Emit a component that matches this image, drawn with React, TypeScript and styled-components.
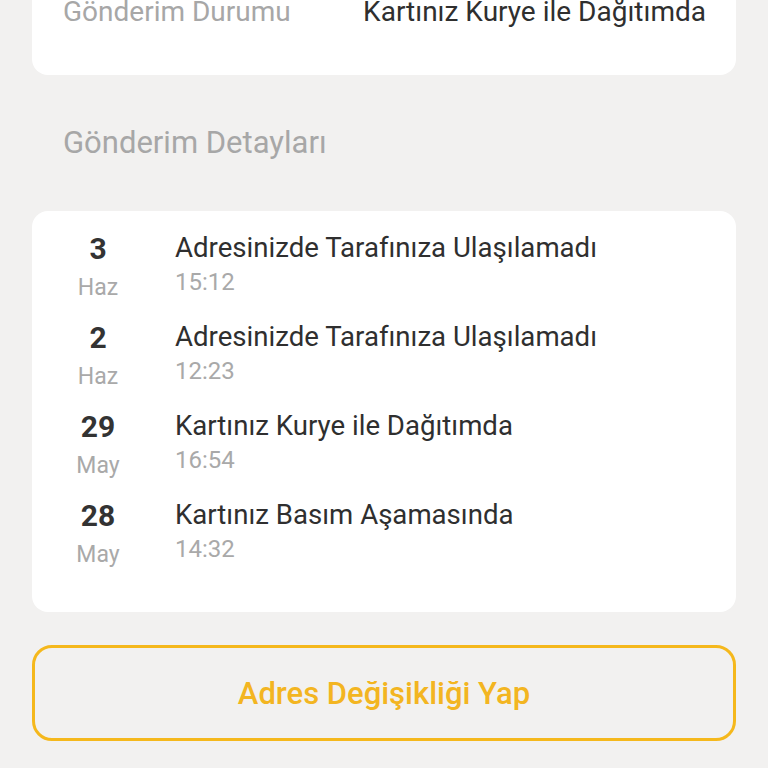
import React from "react";
import styled, { createGlobalStyle } from "styled-components";

const Global = createGlobalStyle`
  html, body { margin: 0; padding: 0; background: #f2f1f0; }
  body { font-family: Roboto, "Noto Sans", sans-serif; -webkit-font-smoothing: antialiased; }
  * { box-sizing: border-box; }
`;

const Page = styled.div`
  display: flex;
  flex-direction: column;
  padding: 0 32px;
  margin-top: -24px;
  min-height: 792px;
`;

const Card = styled.div`
  background: #ffffff;
  border-radius: 16px;
`;

const SummaryCard = styled(Card)`
  padding: 20px 30px 47px 31px;
`;

const SummaryRow = styled.div`
  display: flex;
  justify-content: space-between;
  align-items: baseline;
  font-size: 28px;
  line-height: 32px;
  white-space: nowrap;
`;

const SummaryLabel = styled.span`
  color: #a7a7a7;
`;

const SummaryValue = styled.span`
  color: #2f2f2f;
`;

const SectionTitle = styled.h2`
  margin: 49px 0 49px 31px;
  font-size: 31px;
  line-height: 38px;
  font-weight: 400;
  color: #a7a7a7;
`;

const TimelineCard = styled(Card)`
  display: flex;
  flex-direction: column;
  gap: 12px;
  padding: 18px 30px 39px 31px;
`;

const Row = styled.div`
  display: grid;
  grid-template-columns: 70px 1fr;
  column-gap: 42px;
  align-items: start;
`;

const DateCol = styled.div`
  display: flex;
  flex-direction: column;
  align-items: center;
`;

const Day = styled.span`
  font-size: 30px;
  line-height: 40px;
  font-weight: 700;
  color: #333333;
`;

const Month = styled.span`
  font-size: 23px;
  line-height: 37px;
  color: #a9a9a9;
`;

const TextCol = styled.div`
  display: flex;
  flex-direction: column;
`;

const Title = styled.span`
  font-size: 27.6px;
  line-height: 37px;
  color: #2f2f2f;
`;

const Time = styled.span`
  font-size: 24px;
  line-height: 32px;
  color: #a9a9a9;
`;

const ActionButton = styled.button`
  margin-top: 33px;
  height: 96px;
  width: 100%;
  border: 3px solid #f5b81c;
  border-radius: 20px;
  background: transparent;
  color: #f3b521;
  font-family: Roboto, "Noto Sans", sans-serif;
  font-size: 31px;
  font-weight: 500;
  cursor: pointer;
`;

const events = [
  { day: "3", month: "Haz", title: "Adresinizde Tarafınıza Ulaşılamadı", time: "15:12" },
  { day: "2", month: "Haz", title: "Adresinizde Tarafınıza Ulaşılamadı", time: "12:23" },
  { day: "29", month: "May", title: "Kartınız Kurye ile Dağıtımda", time: "16:54" },
  { day: "28", month: "May", title: "Kartınız Basım Aşamasında", time: "14:32" },
];

export default function App() {
  return (
    <>
      <Global />
      <Page>
        <SummaryCard>
          <SummaryRow>
            <SummaryLabel>Gönderim Durumu</SummaryLabel>
            <SummaryValue>Kartınız Kurye ile Dağıtımda</SummaryValue>
          </SummaryRow>
        </SummaryCard>
        <SectionTitle>Gönderim Detayları</SectionTitle>
        <TimelineCard>
          {events.map((e, i) => (
            <Row key={i}>
              <DateCol>
                <Day>{e.day}</Day>
                <Month>{e.month}</Month>
              </DateCol>
              <TextCol>
                <Title>{e.title}</Title>
                <Time>{e.time}</Time>
              </TextCol>
            </Row>
          ))}
        </TimelineCard>
        <ActionButton>Adres Değişikliği Yap</ActionButton>
      </Page>
    </>
  );
}
